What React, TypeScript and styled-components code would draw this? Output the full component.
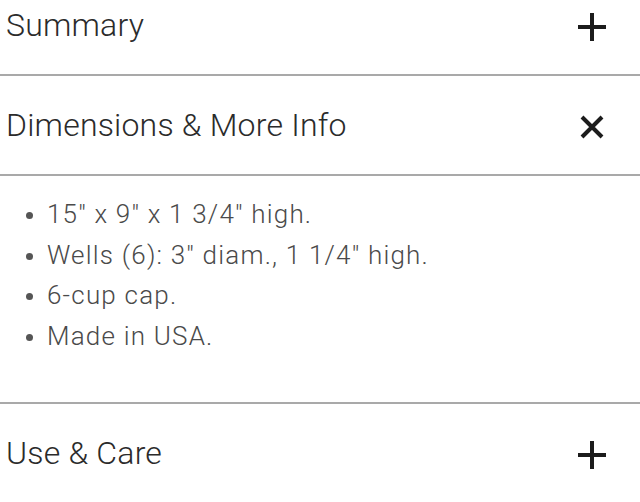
import React from "react";
import styled, { createGlobalStyle } from "styled-components";

const Global = createGlobalStyle`
  html, body { margin: 0; padding: 0; background: #fff; overflow: hidden; }
  body { font-family: Roboto, "Noto Sans", Arial, sans-serif; }
`;

const Accordion = styled.div`
  width: 640px;
  margin-top: -24px;
`;

const Section = styled.section`
  border-bottom: 2px solid #a9a9a9;
`;

const Header = styled.div`
  display: flex;
  align-items: center;
  justify-content: space-between;
  height: 98px;
  padding: 0 33px 0 6px;
`;

const Title = styled.h2`
  margin: 0;
  font-size: 32px;
  font-weight: 300;
  color: #2b2b2b;
  letter-spacing: 0.2px;
`;

const IconBox = styled.span<{ $dy?: number }>`
  display: flex;
  align-items: center;
  justify-content: center;
  width: 30px;
  height: 30px;
  color: #1c1c1c;
  margin-top: ${(p) => p.$dy ?? 0}px;
`;

const Body = styled.ul`
  list-style: none;
  margin: 0;
  padding: 18px 0 46px 0;
  border-top: 2px solid #a9a9a9;
`;

const Item = styled.li`
  position: relative;
  padding-left: 47px;
  font-size: 26px;
  line-height: 40.5px;
  font-weight: 300;
  letter-spacing: 1.2px;
  color: #4a4a4a;
  &::before {
    content: "";
    position: absolute;
    left: 26px;
    top: 18px;
    width: 7px;
    height: 7px;
    border-radius: 50%;
    background: #555;
  }
`;

const Plus = () => (
  <svg width="30" height="30" viewBox="0 0 30 30">
    <path d="M15 1v28M1 15h28" stroke="currentColor" strokeWidth="4" fill="none" />
  </svg>
);

const Cross = () => (
  <svg width="24" height="24" viewBox="0 0 24 24">
    <path d="M2 2l20 20M22 2L2 22" stroke="currentColor" strokeWidth="4" fill="none" />
  </svg>
);

export default function App() {
  return (
    <>
      <Global />
      <Accordion>
        <Section>
          <Header>
            <Title>Summary</Title>
            <IconBox $dy={3}>
              <Plus />
            </IconBox>
          </Header>
        </Section>
        <Section>
          <Header>
            <Title>Dimensions &amp; More Info</Title>
            <IconBox $dy={3}>
              <Cross />
            </IconBox>
          </Header>
          <Body>
            <Item>15" x 9" x 1 3/4" high.</Item>
            <Item>Wells (6): 3" diam., 1 1/4" high.</Item>
            <Item>6-cup cap.</Item>
            <Item>Made in USA.</Item>
          </Body>
        </Section>
        <Section>
          <Header>
            <Title>Use &amp; Care</Title>
            <IconBox $dy={3}>
              <Plus />
            </IconBox>
          </Header>
        </Section>
      </Accordion>
    </>
  );
}
